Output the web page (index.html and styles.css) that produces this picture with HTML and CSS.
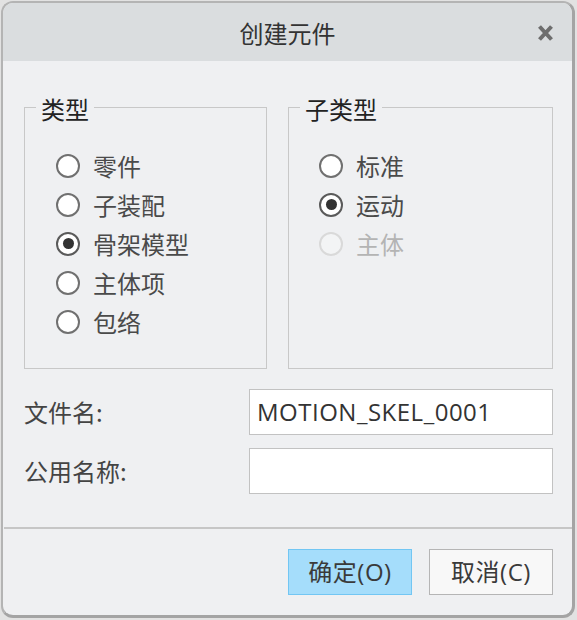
FILE: index.html
```html
<!DOCTYPE html>
<html lang="zh-CN">
<head>
<meta charset="utf-8">
<title>创建元件</title>
<link rel="stylesheet" href="styles.css">
</head>
<body>
<div class="window">
  <div class="titlebar">
    <span class="title">创建元件</span>
    <span class="close" aria-label="关闭">
      <svg width="15" height="16" viewBox="0 0 15 16"><path d="M1.5 1.5 L13.5 14.5 M13.5 1.5 L1.5 14.5" stroke="#6e6e6e" stroke-width="4" stroke-linecap="butt"/></svg>
    </span>
  </div>
  <div class="content">
    <div class="groups">
      <fieldset class="group">
        <legend>类型</legend>
        <div class="radios">
          <div class="radio"><span class="dot"></span><span class="rlabel">零件</span></div>
          <div class="radio"><span class="dot"></span><span class="rlabel">子装配</span></div>
          <div class="radio checked"><span class="dot"></span><span class="rlabel">骨架模型</span></div>
          <div class="radio"><span class="dot"></span><span class="rlabel">主体项</span></div>
          <div class="radio"><span class="dot"></span><span class="rlabel">包络</span></div>
        </div>
      </fieldset>
      <fieldset class="group">
        <legend>子类型</legend>
        <div class="radios">
          <div class="radio"><span class="dot"></span><span class="rlabel">标准</span></div>
          <div class="radio checked"><span class="dot"></span><span class="rlabel">运动</span></div>
          <div class="radio disabled"><span class="dot"></span><span class="rlabel">主体</span></div>
        </div>
      </fieldset>
    </div>
    <div class="form">
      <label class="flabel">文件名:</label>
      <div class="field">MOTION_SKEL_0001</div>
      <label class="flabel">公用名称:</label>
      <div class="field"></div>
    </div>
  </div>
  <div class="divider"></div>
  <div class="footer">
    <button class="btn primary">确定(O)</button>
    <button class="btn">取消(C)</button>
  </div>
</div>
</body>
</html>
```
FILE: styles.css
```css
html, body {
  margin: 0;
  padding: 0;
}
body {
  background: #e2e2e2;
  font-family: "Open Sans", "Noto Sans CJK SC", sans-serif;
  width: 577px;
  height: 620px;
  overflow: hidden;
}
.window {
  box-sizing: border-box;
  width: 574px;
  height: 617px;
  margin: 1px 2px 2px 1px;
  border: 2px solid #b4b4b4;
  border-right: 3px solid #a4a4a4;
  border-bottom: 3px solid #a4a4a4;
  border-radius: 12px;
  background: #eff0f2;
  overflow: hidden;
  display: flex;
  flex-direction: column;
}
.titlebar {
  height: 58px;
  background: #dadddf;
  display: flex;
  align-items: center;
  justify-content: center;
  position: relative;
  flex: none;
}
.title {
  font-family: "Noto Sans CJK SC", sans-serif;
  font-size: 24px;
  color: #333;
  line-height: 30px;
  margin-top: 2px;
}
.close {
  position: absolute;
  right: 19px;
  top: 22px;
  width: 15px;
  height: 16px;
  display: block;
}
.close svg {
  display: block;
}
.content {
  padding: 31px 19px 0 21px;
}
.groups {
  display: grid;
  grid-template-columns: 243px 265px;
  column-gap: 21px;
}
.group {
  margin: 0;
  border: 1px solid #c8c8c8;
  padding: 0 0 27px 11px;
  min-width: 0;
}
.group legend {
  padding: 4px 5px 0;
  font-family: "Noto Sans CJK SC", sans-serif;
  font-size: 24px;
  line-height: 26px;
  color: #222;
}
.radios {
  padding-top: 24px;
  margin-left: 20px;
}
.group + .group .radios {
  margin-left: 19px;
}
.radio {
  display: flex;
  align-items: center;
  height: 39px;
}
.dot {
  box-sizing: border-box;
  width: 24px;
  height: 24px;
  border: 2px solid #707070;
  border-radius: 50%;
  background: #fff;
  display: flex;
  align-items: center;
  justify-content: center;
  flex: none;
}
.radio.checked .dot {
  border-color: #5a5a5a;
}
.radio.checked .dot::after {
  content: "";
  width: 11px;
  height: 11px;
  border-radius: 50%;
  background: #333;
}
.radio.disabled .dot {
  border-color: #d9d9d9;
  background: #f3f4f5;
}
.rlabel {
  margin-left: 13px;
  font-family: "Noto Sans CJK SC", sans-serif;
  font-size: 24px;
  color: #4a4a4a;
  line-height: 30px;
}
.radio.disabled .rlabel {
  color: #b4b4b4;
}
.form {
  margin-top: 20px;
  display: grid;
  grid-template-columns: 225px 304px;
  grid-auto-rows: 46px;
  row-gap: 13px;
  align-items: center;
}
.flabel {
  font-family: "Noto Sans CJK SC", sans-serif;
  font-size: 24px;
  color: #444;
  line-height: 30px;
}
.field {
  box-sizing: border-box;
  height: 46px;
  border: 1px solid #c2c2c2;
  background: #fff;
  padding: 0 7px;
  font-family: "Open Sans", sans-serif;
  font-size: 24px;
  letter-spacing: 0.5px;
  color: #333;
  line-height: 44px;
  white-space: nowrap;
}
.divider {
  margin-top: 33px;
  height: 2px;
  background: #c6c6c6;
  margin-left: 1px;
  margin-right: 0;
}
.footer {
  padding: 20px 19px 0 0;
  display: flex;
  justify-content: flex-end;
  gap: 17px;
}
.btn {
  box-sizing: border-box;
  height: 46px;
  width: 124px;
  margin: 0;
  padding: 0;
  border: 1px solid #b5b5b5;
  background: #f8f8f8;
  font-family: "Open Sans", "Noto Sans CJK SC", sans-serif;
  font-size: 24px;
  letter-spacing: 0.5px;
  color: #3a3a3a;
  line-height: 44px;
}
.btn.primary {
  background: #a5ddfb;
  border-color: #72c6f3;
}
```
